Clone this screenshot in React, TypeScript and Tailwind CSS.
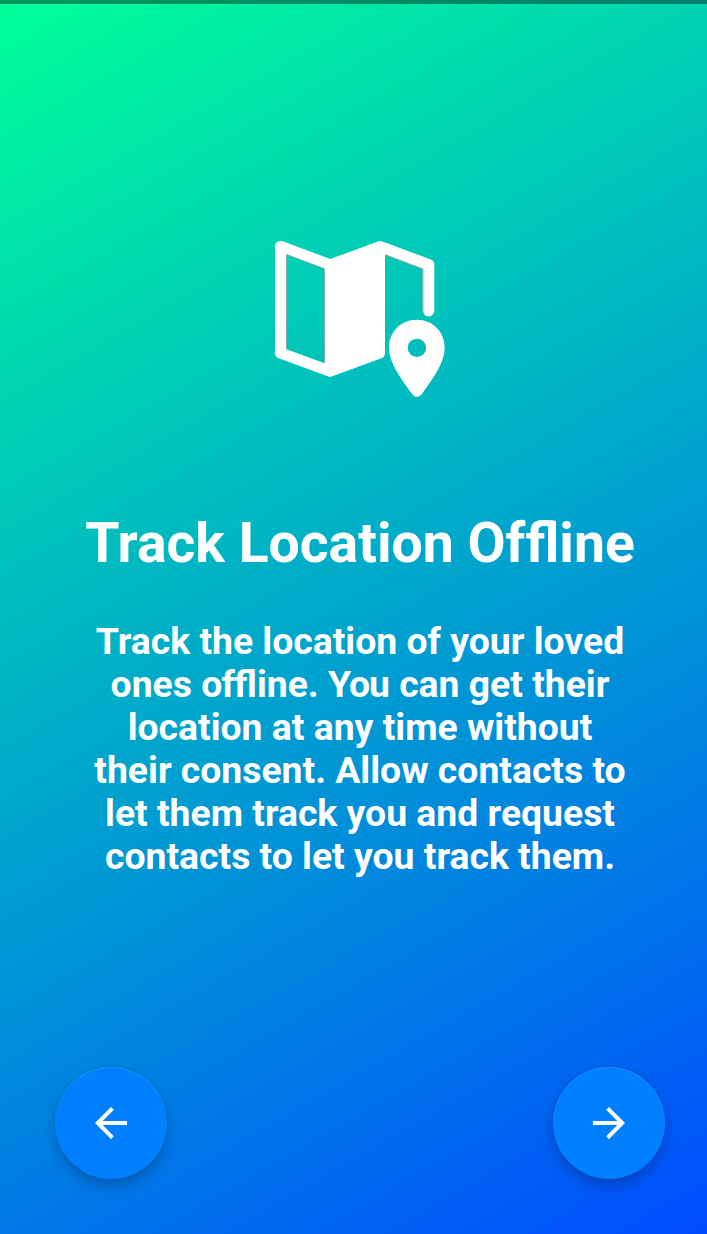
function MapIcon() {
  return (
    <svg className="h-[190px] w-[200px] shrink-0" viewBox="0 0 600 570" fill="none">
      <path
        fill="#fff"
        fillRule="evenodd"
        d="M68 49 L211 102 L352 50 Q360 46 369 50 L511 103 Q523 108 523 120 V257 A17.5 17.5 0 0 1 488 257 V132 L375 89 V384 Q375 396 364 400 L217 454 Q210 457 203 454 L56 400 Q45 396 45 384 V64 C45 52 57 45 68 49 Z M79 88 V373 L194 415 V131 Z"
      />
      <path d="M80 373 V89 L193 131 V414 M376 89 L489 132 V257 Q489 264 494 269" stroke="#8d9c9c" strokeWidth="2.5" />
      <path
        fill="#fff"
        fillRule="evenodd"
        d="M470.500 284 C519 284 554 321 554 368 C554 411 522 456 484 509 Q471 522 458 509 C419 456 387 411 387 368 C387 321 422 284 470.500 284 Z M470.500 341 A27.500 27.500 0 1 0 470.500 396 A27.500 27.500 0 1 0 470.500 341 Z"
      />
      <path d="M474 342 A27 27 0 0 1 486 390" stroke="#78908f" strokeWidth="2.5" />
    </svg>
  );
}

function ArrowButton({ label, d }: { label: string; d: string }) {
  return (
    <button
      aria-label={label}
      className="flex size-28 items-center justify-center rounded-full bg-[#0080ff] shadow-[0_8px_14px_rgba(0,0,0,0.2),0_0_4px_rgba(0,0,0,0.08),inset_0_1px_1px_rgba(255,255,255,0.12)]"
    >
      <svg className="size-12" viewBox="0 0 24 24" fill="#fff">
        <path d={d} />
      </svg>
    </button>
  );
}

export default function App() {
  return (
    <main className="flex h-[1234px] w-[707px] flex-col overflow-hidden bg-[linear-gradient(150.19deg,#00ff99_0%,#004cff_100%)] font-['Roboto',sans-serif] font-bold text-white">
      <div className="h-1 shrink-0 bg-black/40" />
      <section className="flex flex-col items-center pt-[221px] pl-[13px]">
        <MapIcon />
        <h1 className="mt-24 text-[55.3px] leading-[66px] whitespace-nowrap">
          Track Location <span className="tracking-[0.01px]">Of</span>fline
        </h1>
        <p className="mt-[43px] text-center text-[37.33px] leading-[43px] whitespace-nowrap">
          Track the location of your loved
          <br />
          ones <span className="tracking-[-0.8px]">of</span>fline. <span className="tracking-[-1px]">Yo</span>u can get their
          <br />
          location at any time without
          <br />
          their consent. Allow contacts to
          <br />
          let them track you and request
          <br />
          contacts to let you track them.
        </p>
      </section>
      <nav className="mt-auto flex justify-between pr-[42px] pb-[55px] pl-[55px]">
        <ArrowButton label="Previous" d="M20 11H7.830l5.590-5.590L12 4l-8 8 8 8 1.410-1.410L7.830 13H20v-2z" />
        <ArrowButton label="Next" d="M12 4l-1.410 1.410L16.170 11H4v2h12.170l-5.580 5.590L12 20l8-8z" />
      </nav>
    </main>
  );
}
